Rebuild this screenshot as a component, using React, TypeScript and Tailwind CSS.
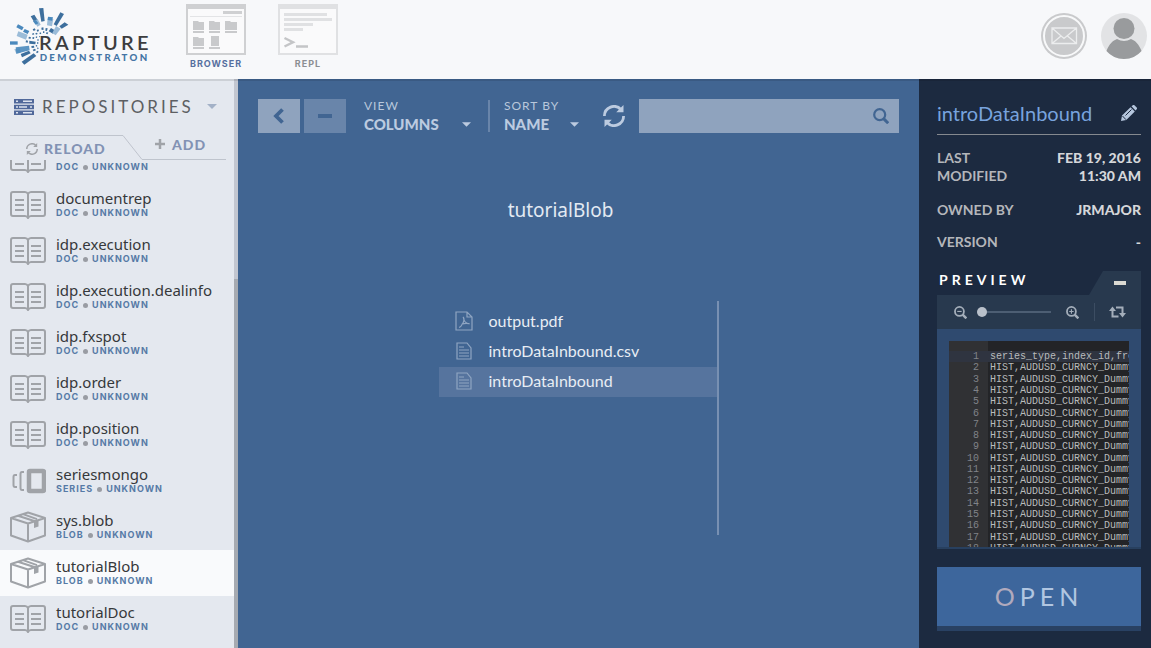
import React from "react";

type Kind = "DOC" | "SERIES" | "BLOB";
type Repo = { name: string; kind: Kind };

const repos: Repo[] = [
  { name: "default", kind: "DOC" },
  { name: "documentrep", kind: "DOC" },
  { name: "idp.execution", kind: "DOC" },
  { name: "idp.execution.dealinfo", kind: "DOC" },
  { name: "idp.fxspot", kind: "DOC" },
  { name: "idp.order", kind: "DOC" },
  { name: "idp.position", kind: "DOC" },
  { name: "seriesmongo", kind: "SERIES" },
  { name: "sys.blob", kind: "BLOB" },
  { name: "tutorialBlob", kind: "BLOB" },
  { name: "tutorialDoc", kind: "DOC" },
];

const files = ["output.pdf", "introDataInbound.csv", "introDataInbound"];

const codeLines = [
  "series_type,index_id,frequency",
  ...Array.from({ length: 17 }, () => "HIST,AUDUSD_CURNCY_Dummy"),
];

function Logo() {
  return (
    <svg viewBox="0 0 480 228" className="h-[76px] w-[160px]" role="img" aria-label="Rapture Demonstraton">
      <g fill="#3d6f9d">
        <path d="M117 25l13-1 4 39-10 2z" />
        <path d="M92 49l11-5 10 16-11 5z" />
        <path d="M181 37l11 5-22 36-9-5z" />
        <path d="M194 67l11 7-20 12-7-7z" />
        <path d="M65 185l36-25 8 8-36 26z" />
        <path d="M62 162l25-10 5 8-26 12z" />
        <path d="M153 84l14 8-8 9-13-7z" />
        <path d="M88 122l19 3-1 8-18-2z" />
      </g>
      <g fill="#9bbcd8">
        <path d="M55 94l28 10-5 15-28-11z" />
        <path d="M103 62l10-5 9 17-10 6z" />
        <path d="M143 55l17 2-4 22-15-3z" />
        <path d="M168 78l14 8-15 20-10-7z" />
        <path d="M43 148l16-3 4 13-14 3z" />
      </g>
      <g fill="#4a89bd">
        <path d="M54 73l17 9-5 9-17-9z" />
        <path d="M74 87l14 6-5 9-14-7z" />
        <path d="M30 124h23v10H30z" />
        <path d="M47 142l40-5 2 14-40 10z" opacity=".9" />
        <path d="M144 50l15 2-3 10-13-2z" />
        <path d="M99 64l9-4 7 10-8 4z" />
      </g>
      <g fill="#3d6f9d">
        <path d="M98 88l6-3 3 5-6 3zM110 90l5-2 2 5-5 2zM124 83l6-1 1 7-6 1zM137 84l6 1-2 8-5-1zM129 94l4 0v5h-4zM118 99l4-2 2 4-4 2zM106 100l5-2 2 4-5 2zM96 101l5-2 2 4-5 2zM140 96l5 2-3 5-4-2zM87 110l6 2-2 5-6-2zM98 111l5 1-1 5-5-1zM108 109l4 1-1 4-4-1zM112 118l4 0v4h-4zM78 121l6 1-1 6-6-1zM111 127l4 0v4h-4zM94 138l8-1 1 6-8 1zM107 136l4-1 1 4-4 1zM98 149l7-3 3 5-7 3zM111 144l3-2 2 4-3 2zM108 156l5-4 3 4-5 4zM118 108l3 1-1 3-3-1z" />
      </g>
      <text x="117" y="150" fontFamily="Lato, sans-serif" fontWeight="600" fontSize="60" letterSpacing="10" fill="#3c3d3f">RAPTURE</text>
      <text x="119" y="182" fontFamily="Lato, sans-serif" fontWeight="900" fontSize="29" letterSpacing="7" fill="#4475a5">DEMONSTRATON</text>
    </svg>
  );
}

function BrowserIcon() {
  return (
    <svg viewBox="0 0 60 51" className="h-[51px] w-[60px]" aria-hidden="true">
      <rect x="1" y="1" width="58" height="49" fill="#fafafb" stroke="#cfd0d2" strokeWidth="2" />
      <path fill="#cfd0d2" d="M0 1a1 1 0 011-1h58a1 1 0 011 1v4H0zM37 7h19v3H37z" />
      <path stroke="#e3e4e6" d="M4 12.500h52" />
      <g fill="#c9cacc">
        <path d="M7 17h5l1 1h5v8H7zM23 17h5l1 1h5v8H23zM39 17h5l1 1h6v8H39zM7 33h5l1 1h5v8H7zM25 32h8v10h-8z" />
        <path d="M7 27h11v2H7zM23 27h11v2H23zM39 27h12v2H39zM7 43h11v2H7zM23 43h11v2H23z" />
      </g>
    </svg>
  );
}

function ReplIcon() {
  return (
    <svg viewBox="0 0 60 51" className="h-[51px] w-[60px]" aria-hidden="true">
      <rect x="1" y="1" width="58" height="49" fill="#fafafb" stroke="#e0e1e3" strokeWidth="2" />
      <path fill="#e0e1e3" d="M0 1a1 1 0 011-1h58a1 1 0 011 1v4H0zM6 9h43v3H6zM6 14h48v3H6zM6 19h29v3H6zM6 24h19v3H6z" />
      <path fill="none" stroke="#c4c5c7" strokeWidth="2.400" d="M6.500 34l8.500 4.200L6.500 42.500M18 42.500h12" />
    </svg>
  );
}

function MailIcon() {
  return (
    <svg viewBox="0 0 46 46" className="size-[46px]" aria-hidden="true">
      <circle cx="23" cy="23" r="23" fill="#c9cacc" />
      <circle cx="23" cy="23" r="20" fill="none" stroke="#f8f9fa" strokeWidth="2" />
      <path fill="none" stroke="#ecedee" strokeWidth="1.300" d="M11 15h24.500v15.500H11zM11 15l12 10.500L35.500 15M11 30.500l9-7.500M35.500 30.500l-9-7.500" />
    </svg>
  );
}

function UserIcon() {
  return (
    <svg viewBox="0 0 46 46" className="size-[46px]" aria-hidden="true">
      <circle cx="23" cy="23" r="23" fill="#e2e3e5" />
      <circle cx="23" cy="15.500" r="10.500" fill="#999b9d" />
      <path fill="#999b9d" d="M5.500 38C8 31 12 27.500 16 26q7 4 14 0c4 1.500 8 5 10.500 12A23 23 0 0123 46 23 23 0 015.500 38z" />
    </svg>
  );
}

function BookIcon() {
  return (
    <svg viewBox="0 0 36 28" className="h-[28px] w-[36px]" fill="none" stroke="#a0a3a8" strokeWidth="2" aria-hidden="true">
      <path d="M18 3q-1-2-3-2H3Q1 1 1 3v20q0 2 2 2h12q2 0 3 2 1-2 3-2h12q2 0 2-2V3q0-2-2-2H21q-2 0-3 2zM18 3v24" />
      <path d="M5 9h9M5 14h9M5 19h9M21 9h10M21 14h10M21 19h10" />
    </svg>
  );
}

function SeriesIcon() {
  return (
    <svg viewBox="0 0 36 28" className="h-[28px] w-[36px]" fill="none" stroke="#a0a3a8" aria-hidden="true">
      <rect x="19" y="4" width="15" height="20" rx="1" strokeWidth="4.500" />
      <path strokeWidth="2" d="M14 5h-2q-1.500 0-1.500 2v14q0 2 1.500 2h2M7 8H5Q3.500 8 3.500 10v8q0 2 1.500 2h2" />
    </svg>
  );
}

function BoxIcon() {
  return (
    <svg viewBox="0 0 36 32" className="h-[32px] w-[36px]" fill="none" stroke="#a0a3a8" strokeWidth="2" strokeLinejoin="round" aria-hidden="true">
      <path d="M1 7l17-5.500L35 7v17.500L18 30.500 1 24.500zM1 7l17 5.500L35 7M18 12.500v18M8 4.700l17 5.500M13 3.100l14 5" />
      <path fill="#a0a3a8" stroke="none" d="M24 10l4.500-1.500v7L24 17z" />
    </svg>
  );
}

function SyncIcon({ className }: { className: string }) {
  return (
    <svg viewBox="0 0 22 22" className={className} aria-hidden="true">
      <g fill="none" stroke="currentColor" strokeWidth="2.800">
        <path d="M1.400 11A9.600 9.600 0 0118 4.500" />
        <path d="M20.600 11A9.600 9.600 0 014 17.500" />
      </g>
      <path fill="currentColor" d="M20.500 0v7.200h-7.300zM1.500 22v-7.200h7.300z" />
    </svg>
  );
}

function SearchIcon({ sign, className }: { sign?: string; className: string }) {
  return (
    <svg viewBox="0 0 16 16" className={className} fill="none" stroke="currentColor" aria-hidden="true">
      <circle cx="6.700" cy="6.700" r="5.500" strokeWidth="2.200" />
      <path strokeWidth="3" d="M10.600 10.600l4.600 4.600" />
      {sign && <path strokeWidth="1.400" d={sign} />}
    </svg>
  );
}

function Caret({ className }: { className: string }) {
  return (
    <svg viewBox="0 0 10 5" className={className} aria-hidden="true">
      <path fill="currentColor" d="M0 0h10L5 5z" />
    </svg>
  );
}

function FileIcon({ pdf }: { pdf: boolean }) {
  return pdf ? (
    <svg viewBox="0 0 18 20" className="h-[20px] w-[18px]" fill="none" stroke="#8fa5c2" strokeWidth="1.200" aria-hidden="true">
      <path d="M1 1h11l5 5v13H1zM12 1v5h5" />
      <path d="M8 6q2 2 0 6-2 4-4 4.500M8.500 7q.5 5 6 6M6.500 13.200q4-1.500 8-.500" />
    </svg>
  ) : (
    <svg viewBox="0 0 18 20" className="h-[20px] w-[18px]" fill="none" stroke="#8fa5c2" strokeWidth="1.200" aria-hidden="true">
      <path d="M2 2h10l4 5v11H2zM4 6h5M4 9h10M4 12h10M4 15h10" />
    </svg>
  );
}

function RepoRow({ repo, selected }: { repo: Repo; selected: boolean }) {
  return (
    <li>
      <button className={"flex h-[46px] w-full items-center gap-[10px] pl-[10px] text-left " + (selected ? "bg-[#f9fafc]" : "")}>
        {repo.kind === "DOC" ? <BookIcon /> : repo.kind === "SERIES" ? <SeriesIcon /> : <BoxIcon />}
        <span className="flex flex-col pb-[2px]">
          <span className="font-['Noto_Sans',sans-serif] text-[15px] leading-[18px] text-[#36383b]">{repo.name}</span>
          <span className="flex items-center gap-[4px] font-['Inter',sans-serif] text-[9px] leading-[12px] font-bold tracking-[1px] text-[#567aa6]">
            {repo.kind}
            <span className="size-[5px] rounded-full bg-[#999ca3]" />
            UNKNOWN
          </span>
        </span>
      </button>
    </li>
  );
}

function Sidebar() {
  return (
    <aside className="flex w-[238px] shrink-0 bg-[#e4e8ef]">
      <div className="flex min-w-0 flex-1 flex-col">
        <button className="flex h-[55px] shrink-0 items-center pl-[14px]">
          <svg viewBox="0 0 20 16" className="h-[16px] w-[20px]" aria-hidden="true">
            <path fill="#50689a" d="M0 0h20v4.500H0zM0 5.800h20v4.500H0zM0 11.500h20V16H0z" />
            <path fill="#dde3ee" d="M2 1.500h2v1.500H2zM9 1.500h9v1.500H9zM2 7.300h2v1.500H2zM5 7.300h8v1.500H5zM16 7.300h2v1.500h-2zM2 13h2v1.500H2zM9 13h9v1.500H9z" />
          </svg>
          <span className="ml-[8px] text-[17px] tracking-[3px] text-[#5d5f63]">REPOSITORIES</span>
          <Caret className="ml-[13px] h-[5px] w-[10px] text-[#a3b1c7]" />
        </button>
        <div className="relative ml-[10px] mr-[8px] flex h-[26px] shrink-0 text-[14px] font-black tracking-[1px] text-[#8292b4]">
          <svg viewBox="0 0 216 26" preserveAspectRatio="none" className="absolute inset-0 h-full w-full" fill="none" stroke="#bfc4cd" aria-hidden="true">
            <path d="M0 1.500h113l19 24h84" />
          </svg>
          <button className="relative flex flex-1 items-center gap-[6px] pl-[16px] pt-[3px]">
            <SyncIcon className="size-[12px] text-[#a0a3a8]" />
            RELOAD
          </button>
          <button className="relative flex w-[71px] items-center gap-[7px] pb-[6px]">
            <svg viewBox="0 0 10 10" className="size-[10px]" aria-hidden="true">
              <path stroke="#a0a3a8" strokeWidth="2.500" d="M5 0v10M0 5h10" />
            </svg>
            ADD
          </button>
        </div>
        <div className="min-h-0 flex-1 overflow-hidden">
          <ul className="-mt-6">
            {repos.map((r) => (
              <RepoRow key={r.name} repo={r} selected={r.name === "tutorialBlob"} />
            ))}
          </ul>
        </div>
      </div>
      <div className="flex w-[4px] flex-col bg-[#c2c6d0] pt-[200px]">
        <div className="flex-1 bg-[#a6aab1]" />
      </div>
    </aside>
  );
}

function Picker({ id, label, value, className }: { id: string; label: string; value: string; className: string }) {
  return (
    <div className={"relative flex flex-col " + className}>
      <label htmlFor={id} className="text-[12px] leading-[16px] tracking-[1px] text-[#b9c8dc]">{label}</label>
      <select id={id} className="w-full appearance-none bg-transparent text-[15px] leading-[20px] font-black text-[#bccbe0]">
        <option>{value}</option>
      </select>
      <Caret className="pointer-events-none absolute right-0 bottom-[7px] h-[5px] w-[9px] text-[#bccbe0]" />
    </div>
  );
}

function Browser() {
  return (
    <main className="flex min-w-0 flex-1 flex-col bg-[#416592]">
      <div className="flex h-[74px] shrink-0 items-center pl-[20px] pr-[20px]">
        <button aria-label="Back" className="flex h-[34px] w-[42px] items-center justify-center bg-[#8fa3be]">
          <svg viewBox="0 0 12 16" className="h-[16px] w-[12px]" aria-hidden="true">
            <path fill="none" stroke="#416592" strokeWidth="3.800" d="M9.500 1.500L3 8l6.500 6.500" />
          </svg>
        </button>
        <button aria-label="Collapse" className="ml-[4px] flex h-[34px] w-[42px] items-center justify-center bg-[#6985aa]">
          <span className="h-[4px] w-[14px] bg-[#416592]" />
        </button>
        <Picker id="view" label="VIEW" value="COLUMNS" className="ml-[18px] w-[107px]" />
        <div className="ml-[17px] h-[32px] w-[2px] bg-[#6985aa]" />
        <Picker id="sort" label="SORT BY" value="NAME" className="ml-[14px] w-[75px]" />
        <button aria-label="Refresh" className="ml-[24px] text-[#bccbe0]">
          <SyncIcon className="size-[22px]" />
        </button>
        <div className="relative ml-[14px] flex h-[34px] min-w-0 flex-1">
          <input type="search" aria-label="Search" className="w-full bg-[#8fa3be] px-3 text-[#1c2a40] outline-none" />
          <SearchIcon className="pointer-events-none absolute right-[10px] top-[9px] size-[16px] text-[#416592]" />
        </div>
      </div>
      <h1 className="mt-[44px] pr-[36px] text-center font-['Noto_Sans',sans-serif] text-[19px] leading-[26px] text-[#e3eaf3]">tutorialBlob</h1>
      <ul className="mx-auto mt-[78px] h-[234px] w-[280px] border-r-2 border-[#7890b2] pt-[6px]">
        {files.map((f) => (
          <li key={f}>
            <button className={"flex h-[30px] w-full items-center gap-[16px] pb-[2px] pl-[16px] text-[16px] text-[#e8edf4] " + (f === "introDataInbound" ? "bg-[#56749e]" : "")}>
              <FileIcon pdf={f.endsWith(".pdf")} />
              {f}
            </button>
          </li>
        ))}
      </ul>
    </main>
  );
}

function Details() {
  return (
    <aside className="flex w-[232px] shrink-0 flex-col bg-[#1c2a40] pl-[18px] pr-[10px]">
      <div className="flex h-[56px] shrink-0 items-center justify-between border-b border-[#85898f] pt-[12px] pr-[4px]">
        <h2 className="text-[20px] leading-[26px] text-[#78a3dd]">introDataInbound</h2>
        <button aria-label="Rename">
          <svg viewBox="0 0 16 16" className="size-[16px]" aria-hidden="true">
            <path fill="#b5c6dd" d="M0 16l1-5.500 8.500-8.300 4.300 4.300L5.300 15zM10.500 1.300L11.800.2q1-.6 1.900.2l2 2q.8.800 0 1.800l-1.200 1.300z" />
            <path fill="none" stroke="#1c2a40" d="M1.500 11l3.500 3.700M4.500 10.500l6-6" />
          </svg>
        </button>
      </div>
      <dl className="flex flex-col pt-[14px] text-[14px] leading-[18px] font-bold text-[#b4b6bb]">
        <div className="flex justify-between">
          <dt>LAST<br />MODIFIED</dt>
          <dd className="text-right font-black text-[#d5d7da]">FEB 19, 2016<br />11:30 AM</dd>
        </div>
        <div className="mt-[16px] flex justify-between">
          <dt>OWNED BY</dt>
          <dd className="font-black text-[#d5d7da]">JRMAJOR</dd>
        </div>
        <div className="mt-[14px] flex justify-between">
          <dt>VERSION</dt>
          <dd className="font-black text-[#d5d7da]">-</dd>
        </div>
      </dl>
      <section className="mt-[20px] flex flex-col">
        <div className="flex h-[24px] items-center justify-between">
          <h3 className="pl-[2px] pb-[6px] text-[14px] leading-[18px] font-bold tracking-[4px] text-white">PREVIEW</h3>
          <button aria-label="Collapse preview">
            <svg viewBox="0 0 52 24" className="h-[24px] w-[52px]" aria-hidden="true">
              <path fill="#28394e" d="M14 0h38v24H0z" />
              <path fill="#dad9d2" d="M25 10h12v4H25z" />
            </svg>
          </button>
        </div>
        <div className="flex h-[34px] items-center bg-[#28394e] pl-[17px] pr-[15px] text-[#a4aeba]">
          <button aria-label="Zoom out"><SearchIcon className="size-[13px]" sign="M4 6.700h5.400" /></button>
          <input
            type="range"
            aria-label="Zoom"
            defaultValue={0}
            className="ml-[10px] h-[10px] w-[74px] appearance-none bg-transparent [&::-webkit-slider-runnable-track]:h-[2px] [&::-webkit-slider-runnable-track]:bg-[#4d5e73] [&::-webkit-slider-thumb]:-mt-[4px] [&::-webkit-slider-thumb]:size-[10px] [&::-webkit-slider-thumb]:appearance-none [&::-webkit-slider-thumb]:rounded-full [&::-webkit-slider-thumb]:bg-[#b9c0ca]"
          />
          <button aria-label="Zoom in" className="ml-[15px]"><SearchIcon className="size-[13px]" sign="M4 6.700h5.400M6.700 4v5.400" /></button>
          <span className="ml-auto h-[18px] w-px bg-[#3c4d62]" />
          <button aria-label="Reload preview" className="ml-[14px]">
            <svg viewBox="0 0 17 12" className="h-[12px] w-[17px]" aria-hidden="true">
              <path fill="none" stroke="currentColor" strokeWidth="2" d="M3.500 4v6.500h6M7 1.500h6.500V8" />
              <path fill="currentColor" d="M0 5l3.500-4.500L7 5zM10 7h7l-3.500 4.500z" />
            </svg>
          </button>
        </div>
        <div className="border-b-2 border-[#28405f] bg-[#2f4a6f] px-[12px] pt-[12px]">
          <div className="h-[206px] overflow-hidden bg-[linear-gradient(to_right,#303134_39px,#232427_39px)] pt-[10px] font-['Liberation_Mono',monospace] text-[10px]">
            <ol className="grid h-[203px] auto-rows-fr">
              {codeLines.map((line, i) => (
                <li key={i} className={"flex min-h-0 items-center whitespace-pre leading-[11px] " + (i === 0 ? "bg-[#2f3440]" : "")}>
                  <span className="w-[30px] shrink-0 text-right text-[#808389]">{i + 1}</span>
                  <span className="pl-[11px] text-[#b9bbbc]">{line}</span>
                </li>
              ))}
            </ol>
          </div>
        </div>
      </section>
      <button className="mt-[18px] flex h-[64px] shrink-0 items-center justify-center border-b-[5px] border-[#294163] bg-[#3d669c] text-[25px] tracking-[5px] text-[#b1c6e1]">
        <span className="text-[#b1aabd]">O</span>PEN
      </button>
    </aside>
  );
}

export default function App() {
  return (
    <div className="flex h-screen flex-col overflow-hidden bg-[#f7f8fa] font-['Lato',sans-serif]">
      <header className="flex h-[79px] shrink-0 items-start pr-[4px]">
        <Logo />
        <nav className="ml-[26px] flex gap-[32px] pt-[4px] font-['Inter',sans-serif] text-[9px] font-bold tracking-[1px]">
          <a href="#browser" className="flex flex-col items-center text-[#566f9f]">
            <BrowserIcon />
            <span className="mt-[2px] leading-[14px]">BROWSER</span>
          </a>
          <a href="#repl" className="flex flex-col items-center text-[#8c8e92]">
            <ReplIcon />
            <span className="mt-[2px] leading-[14px]">REPL</span>
          </a>
        </nav>
        <div className="ml-auto flex gap-[14px] pt-[13px]">
          <button aria-label="Messages"><MailIcon /></button>
          <button aria-label="Account"><UserIcon /></button>
        </div>
      </header>
      <div className="relative flex min-h-0 flex-1">
        <Sidebar />
        <Browser />
        <Details />
        <div className="pointer-events-none absolute inset-x-0 top-0 h-[2px] bg-black/10" />
      </div>
    </div>
  );
}
